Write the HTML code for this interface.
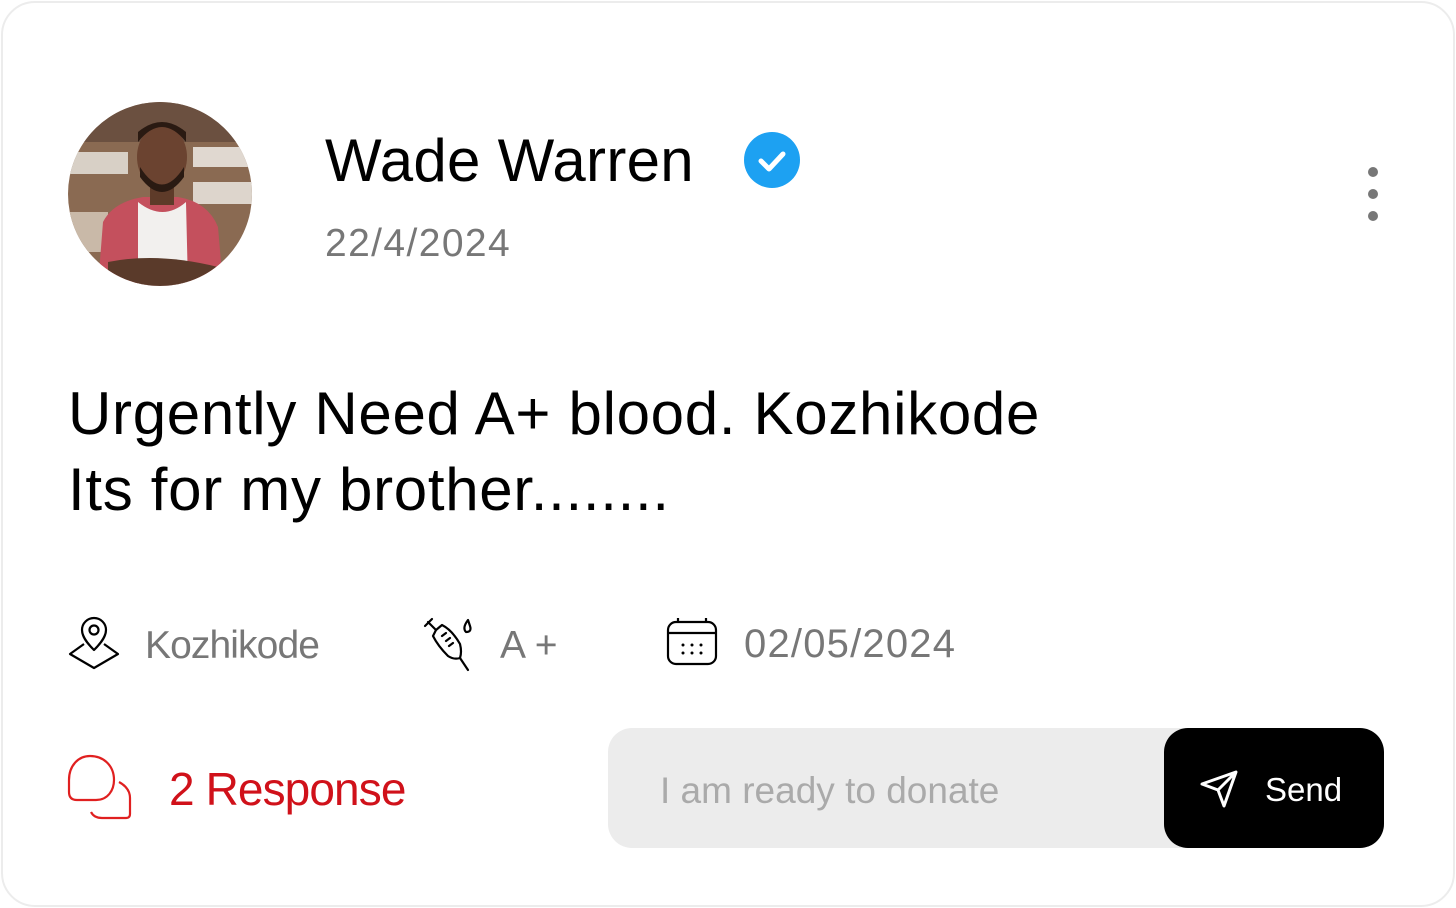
<!DOCTYPE html>
<html><head><meta charset="utf-8"><style>
*{margin:0;padding:0;box-sizing:border-box}
body{width:1456px;height:908px;background:#fff;font-family:"Liberation Sans",sans-serif;position:relative;overflow:hidden}
.card{position:absolute;left:1px;top:1px;width:1454px;height:906px;border:2px solid #ececec;border-radius:34px;background:#fff}
.abs{position:absolute;white-space:nowrap}
</style></head><body>
<div class="card"></div>
<svg class="abs" style="left:68px;top:102px" width="184" height="184" viewBox="0 0 184 184">
<defs><clipPath id="c"><circle cx="92" cy="92" r="92"/></clipPath></defs>
<g clip-path="url(#c)">
<rect width="184" height="184" fill="#8a6a52"/>
<rect x="0" y="0" width="184" height="40" fill="#6b5040"/>
<rect x="0" y="50" width="60" height="22" fill="#d8d0c6"/>
<rect x="125" y="45" width="60" height="20" fill="#e0d8d0"/>
<rect x="125" y="80" width="60" height="22" fill="#ddd5cc"/>
<rect x="0" y="110" width="40" height="40" fill="#c9b9a8"/>
<path d="M30 184 L35 120 Q45 100 75 95 L110 95 Q140 100 150 125 L155 184Z" fill="#c4505d"/>
<path d="M70 100 L70 184 L120 184 L118 100 Q95 120 70 100Z" fill="#f2f0ee"/>
<path d="M40 160 Q90 150 150 165 L150 184 L40 184Z" fill="#5a3a2a"/>
<rect x="82" y="75" width="24" height="28" fill="#5e3b29"/>
<ellipse cx="94" cy="55" rx="25" ry="32" fill="#6b4330"/>
<path d="M70 40 Q94 10 118 40 L118 30 Q94 10 70 30Z" fill="#2a1a12"/>
<path d="M72 65 Q94 100 116 65 L116 75 Q94 105 72 75Z" fill="#2a1a12"/>
</g></svg>
<div class="abs" style="left:325px;top:126px;font-size:60px;color:#000;letter-spacing:0.3px">Wade Warren</div>
<svg class="abs" style="left:744px;top:132px" width="56" height="56"><circle cx="28" cy="28" r="28" fill="#1da1f2"/><path d="M17 29 L25 37 L39 22" stroke="#fff" stroke-width="5" fill="none" stroke-linecap="round" stroke-linejoin="round"/></svg>
<div class="abs" style="left:325px;top:222px;font-size:39px;color:#777;letter-spacing:1.4px">22/4/2024</div>
<svg class="abs" style="left:1364px;top:165px" width="18" height="58"><circle cx="9" cy="7" r="5" fill="#777"/><circle cx="9" cy="29" r="5" fill="#777"/><circle cx="9" cy="51" r="5" fill="#777"/></svg>
<div class="abs" style="left:68px;top:376px;font-size:60px;line-height:76px;color:#000;letter-spacing:0.7px">Urgently Need A+ blood. Kozhikode<br>Its for my brother........</div>
<svg class="abs" style="left:68px;top:616px" width="52" height="56" viewBox="0 0 52 56" fill="none" stroke="#000" stroke-width="2.2" stroke-linejoin="round">
<path d="M26 34 C18 26 14 20 14 14 A12 12 0 0 1 38 14 C38 20 34 26 26 34Z"/><circle cx="26" cy="14" r="4.5"/>
<path d="M16 28 L2 38 L26 52 L50 38 L36 28"/></svg>
<div class="abs" style="left:145px;top:624px;font-size:39px;color:#777;letter-spacing:-0.9px">Kozhikode</div>
<svg class="abs" style="left:422px;top:614px" width="56" height="58" viewBox="0 0 56 58" fill="none" stroke="#000" stroke-width="2.2" stroke-linecap="round" stroke-linejoin="round">
<path d="M3 12 L10 5 M6 8 L14 16"/><path d="M14 16 L20 11 Q30 16 38 30 Q40 38 38 44 Q32 46 26 42 Q16 32 11 22Z"/><path d="M38 44 L46 56"/>
<path d="M20 22 L24 19 M24 27 L28 24 M27 32 L31 29"/><path d="M46 6 Q40 14 44 18 Q50 18 48 12Z"/></svg>
<div class="abs" style="left:500px;top:624px;font-size:39px;color:#777">A +</div>
<svg class="abs" style="left:666px;top:617px" width="52" height="50" viewBox="0 0 52 50" fill="none" stroke="#000" stroke-width="2.2">
<rect x="2" y="5" width="48" height="42" rx="8"/><path d="M2 16 H50 M12 1 V6 M40 1 V6"/>
<g fill="#000" stroke="none"><circle cx="17" cy="28" r="1.5"/><circle cx="26" cy="28" r="1.5"/><circle cx="35" cy="28" r="1.5"/><circle cx="17" cy="36" r="1.5"/><circle cx="26" cy="36" r="1.5"/><circle cx="35" cy="36" r="1.5"/></g></svg>
<div class="abs" style="left:744px;top:622px;font-size:40px;color:#777;letter-spacing:1.2px">02/05/2024</div>
<svg class="abs" style="left:66px;top:754px" width="68" height="68" viewBox="0 0 68 68" fill="none" stroke="#e02020" stroke-width="2.2">
<path d="M24 2 C12 2 3 12 3 26 L3 38 Q3 46 11 46 L30 46 C42 46 48 36 48 26 C48 12 38 2 24 2Z"/>
<path d="M53 28 Q64 34 64 44 L64 60 Q64 64 60 64 L36 64 Q28 64 25 58"/></svg>
<div class="abs" style="left:169px;top:762px;font-size:46px;color:#d0111a;letter-spacing:-0.9px">2 Response</div>
<div class="abs" style="left:608px;top:728px;width:600px;height:120px;background:#ececec;border-radius:24px"></div>
<div class="abs" style="left:660px;top:770px;font-size:37px;color:#aaa">I am ready to donate</div>
<div class="abs" style="left:1164px;top:728px;width:220px;height:120px;background:#000;border-radius:24px"></div>
<svg class="abs" style="left:1200px;top:770px" width="40" height="38" viewBox="0 0 40 38" fill="none" stroke="#fff" stroke-width="3" stroke-linejoin="round">
<path d="M2 14 L36 2 L24 36 L18 20Z M18 20 L36 2"/></svg>
<div class="abs" style="left:1265px;top:771px;font-size:33px;color:#fff">Send</div>
</body></html>
